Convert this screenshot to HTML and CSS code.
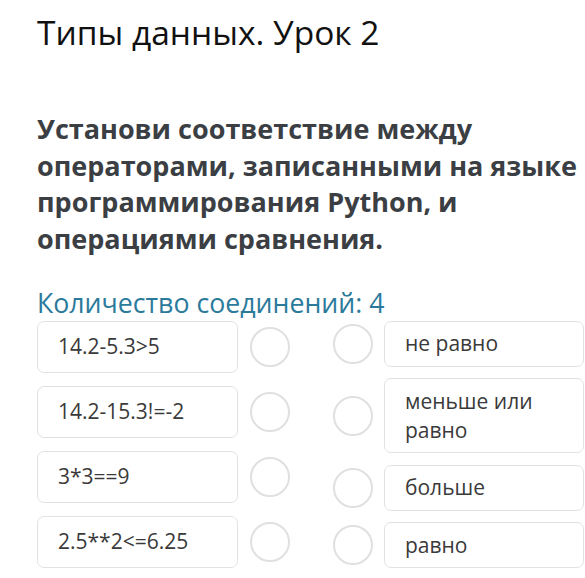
FILE: index.html
```html
<!DOCTYPE html>
<html lang="ru">
<head>
<meta charset="utf-8">
<title>Типы данных. Урок 2</title>
<link rel="stylesheet" href="styles.css">
</head>
<body>
<main class="page">
  <h1 class="title">Типы данных. Урок 2</h1>
  <h2 class="question">Установи соответствие между операторами, записанными на языке программирования Python, и операциями сравнения.</h2>
  <p class="count">Количество соединений: 4</p>
  <div class="match">
    <div class="col col-left">
      <div class="row"><div class="box box-l">14.2-5.3&gt;5</div><span class="dot"></span></div>
      <div class="row"><div class="box box-l">14.2-15.3!=-2</div><span class="dot"></span></div>
      <div class="row"><div class="box box-l">3*3==9</div><span class="dot"></span></div>
      <div class="row"><div class="box box-l">2.5**2&lt;=6.25</div><span class="dot"></span></div>
    </div>
    <div class="col col-right">
      <div class="row"><span class="dot"></span><div class="box box-r">не равно</div></div>
      <div class="row"><span class="dot"></span><div class="box box-r">меньше или равно</div></div>
      <div class="row"><span class="dot"></span><div class="box box-r">больше</div></div>
      <div class="row"><span class="dot"></span><div class="box box-r">равно</div></div>
    </div>
  </div>
</main>
</body>
</html>
```
FILE: styles.css
```css
* { box-sizing: border-box; }
html, body { margin: 0; padding: 0; background: #fff; }
body {
  font-family: "Open Sans", "Liberation Sans", sans-serif;
  color: #333;
  overflow: hidden;
  width: 585px;
}
.page { padding: 0 0 0 37px; }
.title {
  margin: 0;
  padding-top: 10px;
  font-size: 33.5px;
  font-weight: 400;
  line-height: 44px;
  color: #111;
}
.question {
  margin: 0;
  padding-top: 57px;
  font-size: 27px;
  font-weight: 700;
  line-height: 36.7px;
  color: #3b3f44;
  width: 548px;
}
.count {
  margin: 0;
  padding-top: 28px;
  font-size: 26.7px;
  line-height: 34px;
  color: #2b7a9c;
}
.match {
  display: flex;
  gap: 43px;
  padding-top: 1px;
}
.col { display: flex; flex-direction: column; }
.col-left { gap: 13px; }
.col-right { gap: 11.5px; }
.row { display: flex; align-items: center; }
.col-left .row { gap: 12px; }
.col-right .row { gap: 11px; }
.box {
  border: 1px solid #e2e2e2;
  border-radius: 7px;
  font-size: 21px;
  line-height: 29px;
  color: #3a3a3a;
  padding: 7.5px 10px 7.5px 20px;
  display: flex;
  align-items: center;
}
.box-l { width: 201px; min-height: 52px; }
.box-r { width: 200px; min-height: 45px; }
.dot {
  width: 40px;
  height: 40px;
  flex: none;
  border-radius: 50%;
  border: 2.5px solid #e0e0e0;
}
```
